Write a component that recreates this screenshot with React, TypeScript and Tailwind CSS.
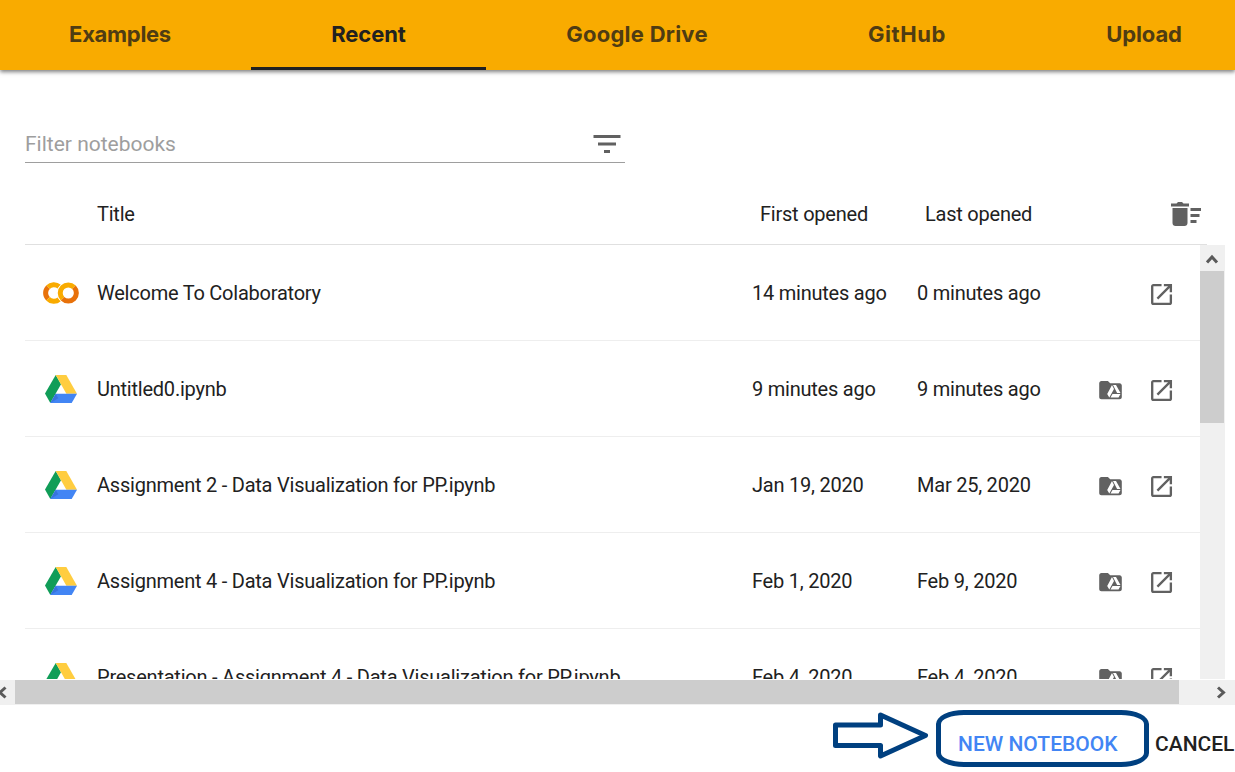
const tabs = [
  { label: "Examples", cls: "w-[262px] text-[#4f3c13]", text: "tracking-[-0.3px]" },
  { label: "Recent", cls: "w-[235px] text-[#212121] border-b-3 border-[#212121] pt-[3px]", text: "tracking-[-0.1px]" },
  { label: "Google Drive", cls: "w-[302px] text-[#4f3c13]", text: "tracking-[0.25px]" },
  { label: "GitHub", cls: "w-[238px] text-[#4f3c13]", text: "tracking-[0.55px]" },
  { label: "Upload", cls: "w-[236px] text-[#4f3c13]", text: "tracking-[-0.1px]" },
];

const rows = [
  { title: "Welcome To Colaboratory", first: "14 minutes ago", last: "0 minutes ago", drive: false },
  { title: "Untitled0.ipynb", first: "9 minutes ago", last: "9 minutes ago", drive: true },
  { title: "Assignment 2 - Data Visualization for PP.ipynb", first: "Jan 19, 2020", last: "Mar 25, 2020", drive: true },
  { title: "Assignment 4 - Data Visualization for PP.ipynb", first: "Feb 1, 2020", last: "Feb 9, 2020", drive: true },
  { title: "Presentation - Assignment 4 - Data Visualization for PP.ipynb", first: "Feb 4, 2020", last: "Feb 4, 2020", drive: true },
];

function ColabIcon() {
  return (
    <svg width="36" height="22" viewBox="0 0 36 22" fill="none" strokeWidth="5">
      <path d="M16.2 4.7A8 8 0 0 0 5 5.3" stroke="#f9ab00" />
      <path d="M5 5.3A8 8 0 0 0 5 16.7" stroke="#e8710a" />
      <path d="M5 16.7A8 8 0 0 0 16.2 17.3" stroke="#f9ab00" />
      <circle cx="25.3" cy="11" r="8" stroke="#fff" strokeWidth="6.6" />
      <path d="M31 5.3A8 8 0 0 0 19.6 16.7" stroke="#f9ab00" />
      <path d="M31 5.3A8 8 0 0 1 19.6 16.7" stroke="#e8710a" />
    </svg>
  );
}

function DriveIcon() {
  return (
    <svg width="32" height="28" viewBox="0 0 32 28">
      <path d="M10.7 0 0 18.4 5.3 28 16 9.3z" fill="#109d58" />
      <path d="M10.7 0h10.6L32 18.7H21.4z" fill="#ffcd40" />
      <path d="M10.7 18.7H32L26.7 28H5.3z" fill="#4285f4" />
      <path d="m10.7 18.7 2.6 4.6L5.3 28z" fill="#3874dd" />
    </svg>
  );
}

function FolderDriveIcon() {
  return (
    <svg width="24" height="20" viewBox="0 0 24 20">
      <path d="M2.4 1h6.500l2.300 2.300h9.400c1.200 0 2.200 1 2.200 2.300v11.400c0 1.300-1 2.300-2.300 2.300H2.400C1.200 19.300.2 18.300.2 17V3.300C.2 2 1.200 1 2.400 1z" fill="#616161" />
      <path d="M13 5.100 8.200 13.900l2.100 3.700 4.700-8.600zM14 5.100h3l4.500 7.900h-3.400zM13.500 14.100h8l-2 3.500h-8z" fill="#fff" />
    </svg>
  );
}

function OpenIcon() {
  return (
    <svg width="28" height="28" viewBox="0.4 -0.4 24 24" fill="#616161">
      <path d="M19 19H5V5h7V3H5c-1.110 0-2 .9-2 2v14c0 1.100.89 2 2 2h14c1.100 0 2-.9 2-2v-7h-2v7zM14 3v2h3.590l-9.830 9.830 1.410 1.410L19 6.410V10h2V3h-7z" />
    </svg>
  );
}

function Chevron({ d, w, h }: { d: string; w: number; h: number }) {
  return (
    <svg width={w} height={h} viewBox={`0 0 ${w} ${h}`} fill="none" stroke="#5a5a5a" strokeWidth="3">
      <path d={d} />
    </svg>
  );
}

export default function App() {
  return (
    <div className="flex h-[772px] w-[1235px] flex-col overflow-hidden bg-white font-['Roboto',sans-serif] text-[20px] leading-6 text-[#212121]">
      <nav className="z-10 flex h-[70px] shrink-0 bg-[#f9ab00] shadow-[0_2px_4px_rgba(0,0,0,0.5)]">
        <div className="-ml-[11px] flex shrink-0">
          {tabs.map((t) => (
            <div key={t.label} className={`flex h-[70px] shrink-0 items-center justify-center whitespace-nowrap font-['Inter',sans-serif] text-[22px] font-bold ${t.cls}`}>
              <span className={`-mt-[2px] ${t.text}`}>{t.label}</span>
            </div>
          ))}
        </div>
      </nav>

      <div className="ml-[25px] mt-[55px] flex h-[38px] w-[600px] shrink-0 items-center justify-between border-b border-[#9e9e9e] pr-1">
        <span className="text-[21px] text-[#9e9e9e]">Filter notebooks</span>
        <svg width="28" height="18" viewBox="0 0 28 18" fill="#616161">
          <path d="M.5 0h27v3H.5zM5 7.500h18v3H5zM11 15h6v3h-6z" />
        </svg>
      </div>

      <div className="ml-[25px] flex h-[82px] w-[1182px] shrink-0 items-center whitespace-nowrap border-b border-[#e0e0e0] pl-[72px] pt-[20px] tracking-[-0.23px]">
        <span className="w-[663px]">Title</span>
        <span className="w-[165px]">First opened</span>
        <span className="w-[246px]">Last opened</span>
        <svg className="shrink-0" width="31" height="24" viewBox="0 0 31 24" fill="#616161">
          <path d="M0 1.500h5.500L7 0h4l1.500 1.500H18v3H0zM1.500 6h15v15c0 1.700-1.300 3-3 3h-9c-1.700 0-3-1.300-3-3zM19.500 6H30v3H19.500zM19.500 12h9v3h-9zM19.500 18h6v3h-6z" />
        </svg>
      </div>

      <div className="flex h-[434px] shrink-0 overflow-hidden">
        <div className="ml-[25px] w-[1175px] shrink-0 tracking-[-0.23px]">
          {rows.map((r) => (
            <div key={r.title} className="flex h-24 items-center border-b border-[#eee] whitespace-nowrap">
              <div className="flex w-[72px] justify-center">{r.drive ? <DriveIcon /> : <ColabIcon />}</div>
              <span className="w-[655px]">{r.title}</span>
              <span className="w-[165px]">{r.first}</span>
              <span className="w-[181px]">{r.last}</span>
              <div className="flex w-[50px] pt-[3px] pl-px">{r.drive && <FolderDriveIcon />}</div>
              <div className="pt-[3px]">
                <OpenIcon />
              </div>
            </div>
          ))}
        </div>
        <div className="flex w-[25px] shrink-0 flex-col bg-[#f0f0f0]">
          <div className="flex h-[26px] items-center justify-center pt-[2px]">
            <Chevron w={13} h={10} d="M1 8.500 6 3l5 5.500" />
          </div>
          <div className="h-[152px] w-6 bg-[#cdcdcd]" />
        </div>
      </div>

      <div className="mt-px flex h-[25px] shrink-0 bg-[#f0f0f0]">
        <div className="flex w-[15px] pt-[6px]">
          <Chevron w={7} h={13} d="M5.500 1.500 0 6.500l5.500 5" />
        </div>
        <div className="h-6 w-[1164px] bg-[#cdcdcd]" />
        <div className="pl-[37px] pt-[6px]">
          <Chevron w={10} h={13} d="M2 1.500l5.500 5L2 11.500" />
        </div>
      </div>

      <div className="flex h-[67px] shrink-0 text-[21px] font-medium whitespace-nowrap">
        <svg className="ml-[832px] mt-[6px] shrink-0" width="97" height="50" viewBox="0 0 97 50" fill="none" stroke="#004080" strokeWidth="5" strokeLinejoin="round">
          <path d="M3.500 14h45V4L93.500 24.500 48.500 45V34.500h-45z" />
        </svg>
        <div className="ml-[7px] mt-[5px] flex h-[57px] w-[213px] shrink-0 items-center rounded-[28px/14px] border-[5px] border-[#004080] pl-[17px] pt-[11px] text-[#4285f4]">NEW NOTEBOOK</div>
        <div className="ml-[6px] mt-[27px]">CANCEL</div>
      </div>
    </div>
  );
}
